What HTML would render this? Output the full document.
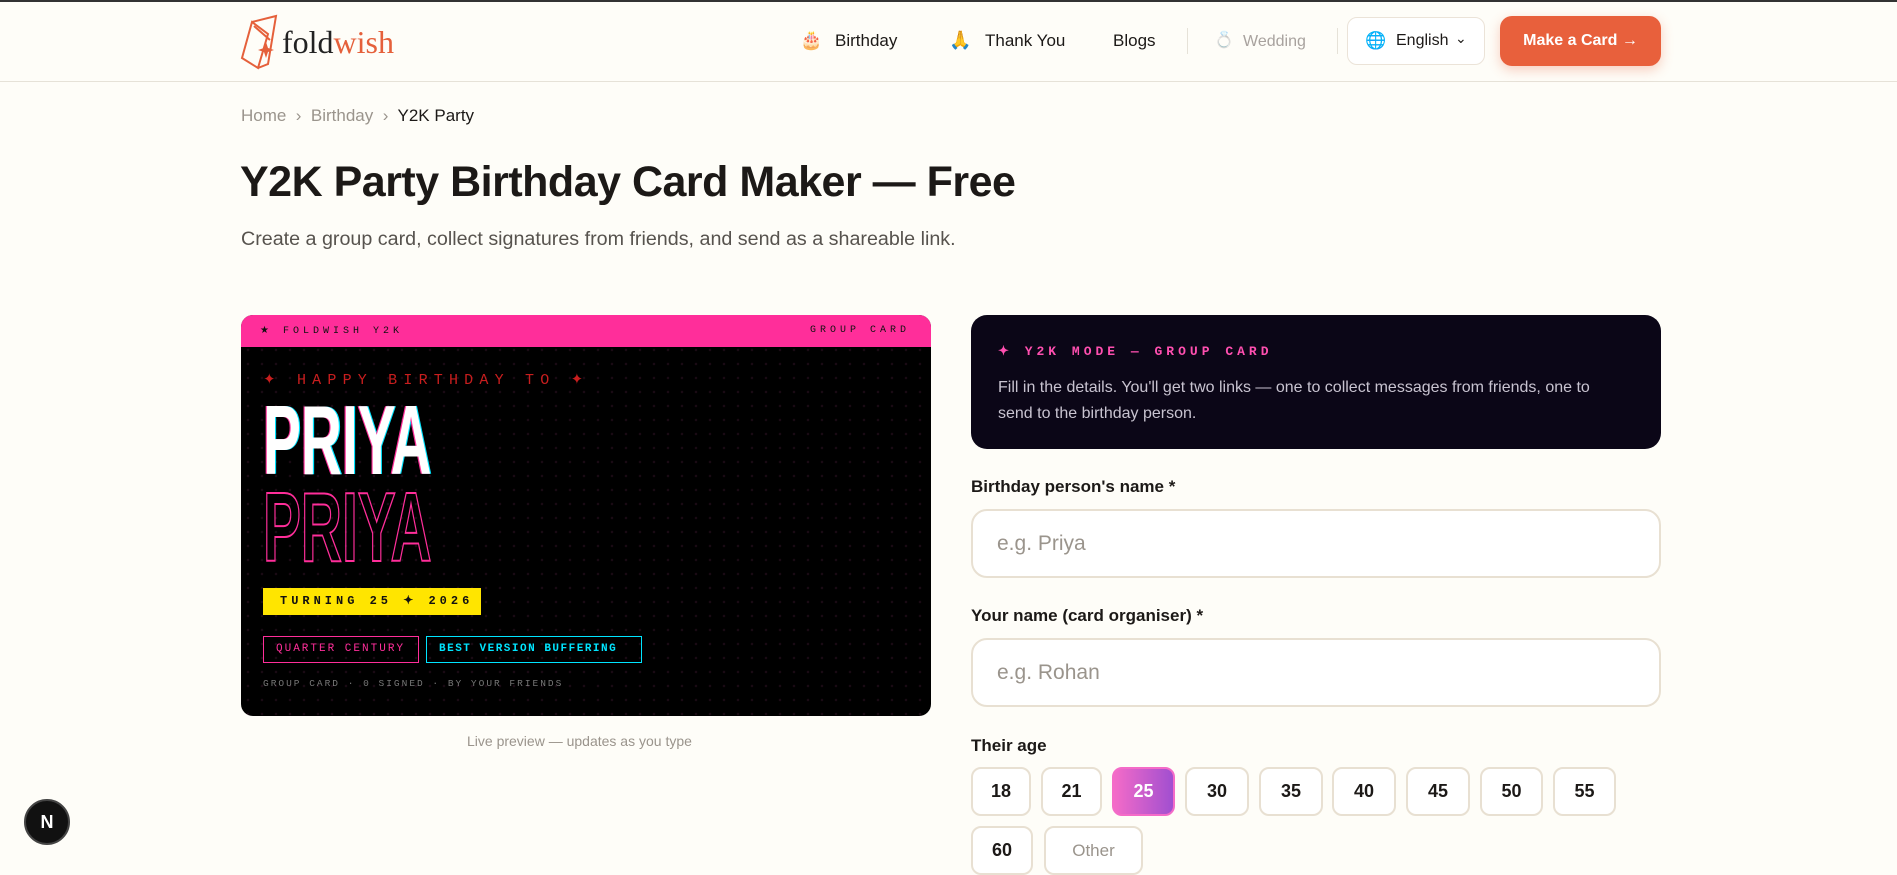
<!DOCTYPE html>
<html><head><meta charset="utf-8">
<style>
*{box-sizing:border-box;margin:0;padding:0}
body{width:1897px;height:870px;overflow:hidden;background:#fefdf8;font-family:"Liberation Sans",sans-serif;position:relative;color:#1c1917}
.a{position:absolute;white-space:nowrap}
.mono{font-family:"Liberation Mono",monospace}
.nav{font-size:17px;color:#1c1917;top:31px}
.lbl{font-size:17px;font-weight:600;color:#1c1917;left:971px}
.inp{position:absolute;left:971px;width:690px;height:69px;border:2px solid #e8e0d2;border-radius:16px;background:#fff;font-size:21px;color:#9a948c;padding:21px 0 0 24px}
.age{position:absolute;height:49px;border:2px solid #e8e0d2;border-radius:10px;background:#fff;font-size:18px;font-weight:600;text-align:center;line-height:45px}
</style></head><body>
<div class="a" style="left:0;top:0;width:1897px;height:2px;background:#333"></div>
<div class="a" style="left:0;top:81px;width:1897px;height:1px;background:#e6e2d8"></div>
<svg class="a" style="left:240px;top:14px" width="48" height="56" viewBox="0 0 48 56">
<g fill="none" stroke="#e5603b" stroke-width="2"><path d="M12 8 L2 44 L18 54 L28 20 Z"/><path d="M12 8 L36 2 L28 50 L18 54"/><path d="M14 12 L30 26"/></g>
<path d="M26 28 l2 6 6 2 -6 2 -2 6 -2 -6 -6 -2 6 -2z" fill="#e5603b"/></svg>
<div class="a" style="left:282px;top:24px;font-family:'Liberation Serif',serif;font-size:32px;color:#222">fold<span style="color:#e5603b">wish</span></div>
<div class="a" style="left:800px;top:30px;font-size:18px">🎂</div>
<div class="a nav" style="left:835px">Birthday</div>
<div class="a" style="left:949px;top:30px;font-size:18px">🙏</div>
<div class="a nav" style="left:985px">Thank You</div>
<div class="a nav" style="left:1113px">Blogs</div>
<div class="a" style="left:1187px;top:28px;width:1px;height:26px;background:#e6e2d8"></div>
<div class="a" style="left:1214px;top:30px;font-size:16px;opacity:.5">💍</div>
<div class="a nav" style="left:1243px;color:#a8a29e;font-size:16px;top:33px">Wedding</div>
<div class="a" style="left:1337px;top:28px;width:1px;height:26px;background:#e6e2d8"></div>
<div class="a" style="left:1347px;top:17px;width:138px;height:48px;border:1px solid #ebe3d8;border-radius:10px;background:#fff"></div>
<div class="a" style="left:1365px;top:31px;font-size:17px">🌐</div>
<div class="a" style="left:1396px;top:32px;font-size:16px">English</div>
<div class="a" style="left:1455px;top:30px;font-size:14px">⌄</div>
<div class="a" style="left:1500px;top:16px;width:161px;height:50px;border-radius:12px;background:#e8603c;box-shadow:0 4px 12px rgba(232,96,60,.3);color:#fff;font-size:16px;font-weight:700;text-align:center;line-height:50px">Make a Card →</div>
<div class="a" style="left:241px;top:106px;font-size:17px;color:#9a948c">Home &nbsp;›&nbsp; Birthday &nbsp;›&nbsp; <span style="color:#1c1917">Y2K Party</span></div>
<div class="a" style="left:240px;top:158px;font-size:43px;font-weight:700;letter-spacing:-0.5px">Y2K Party Birthday Card Maker — Free</div>
<div class="a" style="left:241px;top:228px;font-size:19.7px;color:#57534e">Create a group card, collect signatures from friends, and send as a shareable link.</div>
<div class="a" style="left:241px;top:315px;width:690px;height:401px;border-radius:12px;background:#000;overflow:hidden;background-image:radial-gradient(#1a0a14 1px,transparent 1.5px);background-size:14px 14px">
<div style="position:absolute;left:0;top:0;width:690px;height:32px;background:#ff2e9a"></div>
<div class="a mono" style="left:19px;top:10px;font-size:10px;letter-spacing:4px;color:#111">★ FOLDWISH Y2K</div>
<div class="a mono" style="right:21px;top:10px;font-size:10px;letter-spacing:4px;color:#111">GROUP CARD</div>
<div class="a mono" style="left:22px;top:55px;font-size:15px;letter-spacing:6.2px;color:#c81e1e">✦ HAPPY BIRTHDAY TO ✦</div>
<div class="a" style="left:22px;top:72px;font-size:98px;font-weight:700;color:#fff;transform:scaleX(.58);transform-origin:0 0;text-shadow:-2px 0 #ff2e9a,2px 0 #00e5ff;line-height:1.1">PRIYA</div>
<div class="a" style="left:22px;top:159px;font-size:98px;font-weight:700;color:transparent;-webkit-text-stroke:2px #ff2e9a;transform:scaleX(.58);transform-origin:0 0;line-height:1.1">PRIYA</div>
<div class="a mono" style="left:22px;top:273px;width:218px;height:27px;background:#ffe500;color:#111;font-size:12px;font-weight:700;letter-spacing:4px;line-height:27px;padding-left:17px">TURNING 25 ✦ 2026</div>
<div class="a mono" style="left:22px;top:321px;width:156px;height:27px;border:1.5px solid #ff2e9a;color:#ff2e9a;font-size:11px;letter-spacing:2px;line-height:24px;padding-left:12px">QUARTER CENTURY</div>
<div class="a mono" style="left:185px;top:321px;width:216px;height:27px;border:1.5px solid #00e5ff;color:#00e5ff;font-size:11px;font-weight:700;letter-spacing:1.5px;line-height:24px;padding-left:12px">BEST VERSION BUFFERING</div>
<div class="a mono" style="left:22px;top:363px;font-size:9.5px;letter-spacing:2px;color:#777">GROUP CARD · 0 SIGNED · BY YOUR FRIENDS</div>
</div>
<div class="a" style="left:467px;top:733px;font-size:14px;color:#9a948c">Live preview — updates as you type</div>
<div class="a" style="left:971px;top:315px;width:690px;height:134px;border-radius:16px;background:#0b0617"></div>
<div class="a mono" style="left:998px;top:344px;font-size:13px;font-weight:700;letter-spacing:4px;color:#ff4fb0">✦ Y2K MODE — GROUP CARD</div>
<div class="a" style="left:998px;top:375px;font-size:16px;line-height:26px;color:#c8c3d0;white-space:normal;width:625px">Fill in the details. You'll get two links — one to collect messages from friends, one to send to the birthday person.</div>
<div class="a lbl" style="top:477px">Birthday person's name *</div>
<div class="inp" style="top:509px">e.g. Priya</div>
<div class="a lbl" style="top:606px">Your name (card organiser) *</div>
<div class="inp" style="top:638px">e.g. Rohan</div>
<div class="a lbl" style="top:736px">Their age</div>
<div class="age" style="left:971px;top:767px;width:60px">18</div>
<div class="age" style="left:1041px;top:767px;width:61px">21</div>
<div class="age" style="left:1112px;top:767px;width:63px;background:linear-gradient(90deg,#f46bc8,#a14fd0);border-color:#f46bc8;color:#fff">25</div>
<div class="age" style="left:1185px;top:767px;width:64px">30</div>
<div class="age" style="left:1259px;top:767px;width:64px">35</div>
<div class="age" style="left:1332px;top:767px;width:64px">40</div>
<div class="age" style="left:1406px;top:767px;width:64px">45</div>
<div class="age" style="left:1480px;top:767px;width:63px">50</div>
<div class="age" style="left:1553px;top:767px;width:63px">55</div>
<div class="age" style="left:971px;top:826px;width:62px">60</div>
<div class="age" style="left:1044px;top:826px;width:99px;font-weight:400;color:#9a948c;font-size:17px">Other</div>
<div class="a" style="left:24px;top:799px;width:46px;height:46px;border-radius:50%;background:#111;border:2px solid #444;color:#fff;font-size:18px;font-weight:700;text-align:center;line-height:42px">N</div>
</body></html>
